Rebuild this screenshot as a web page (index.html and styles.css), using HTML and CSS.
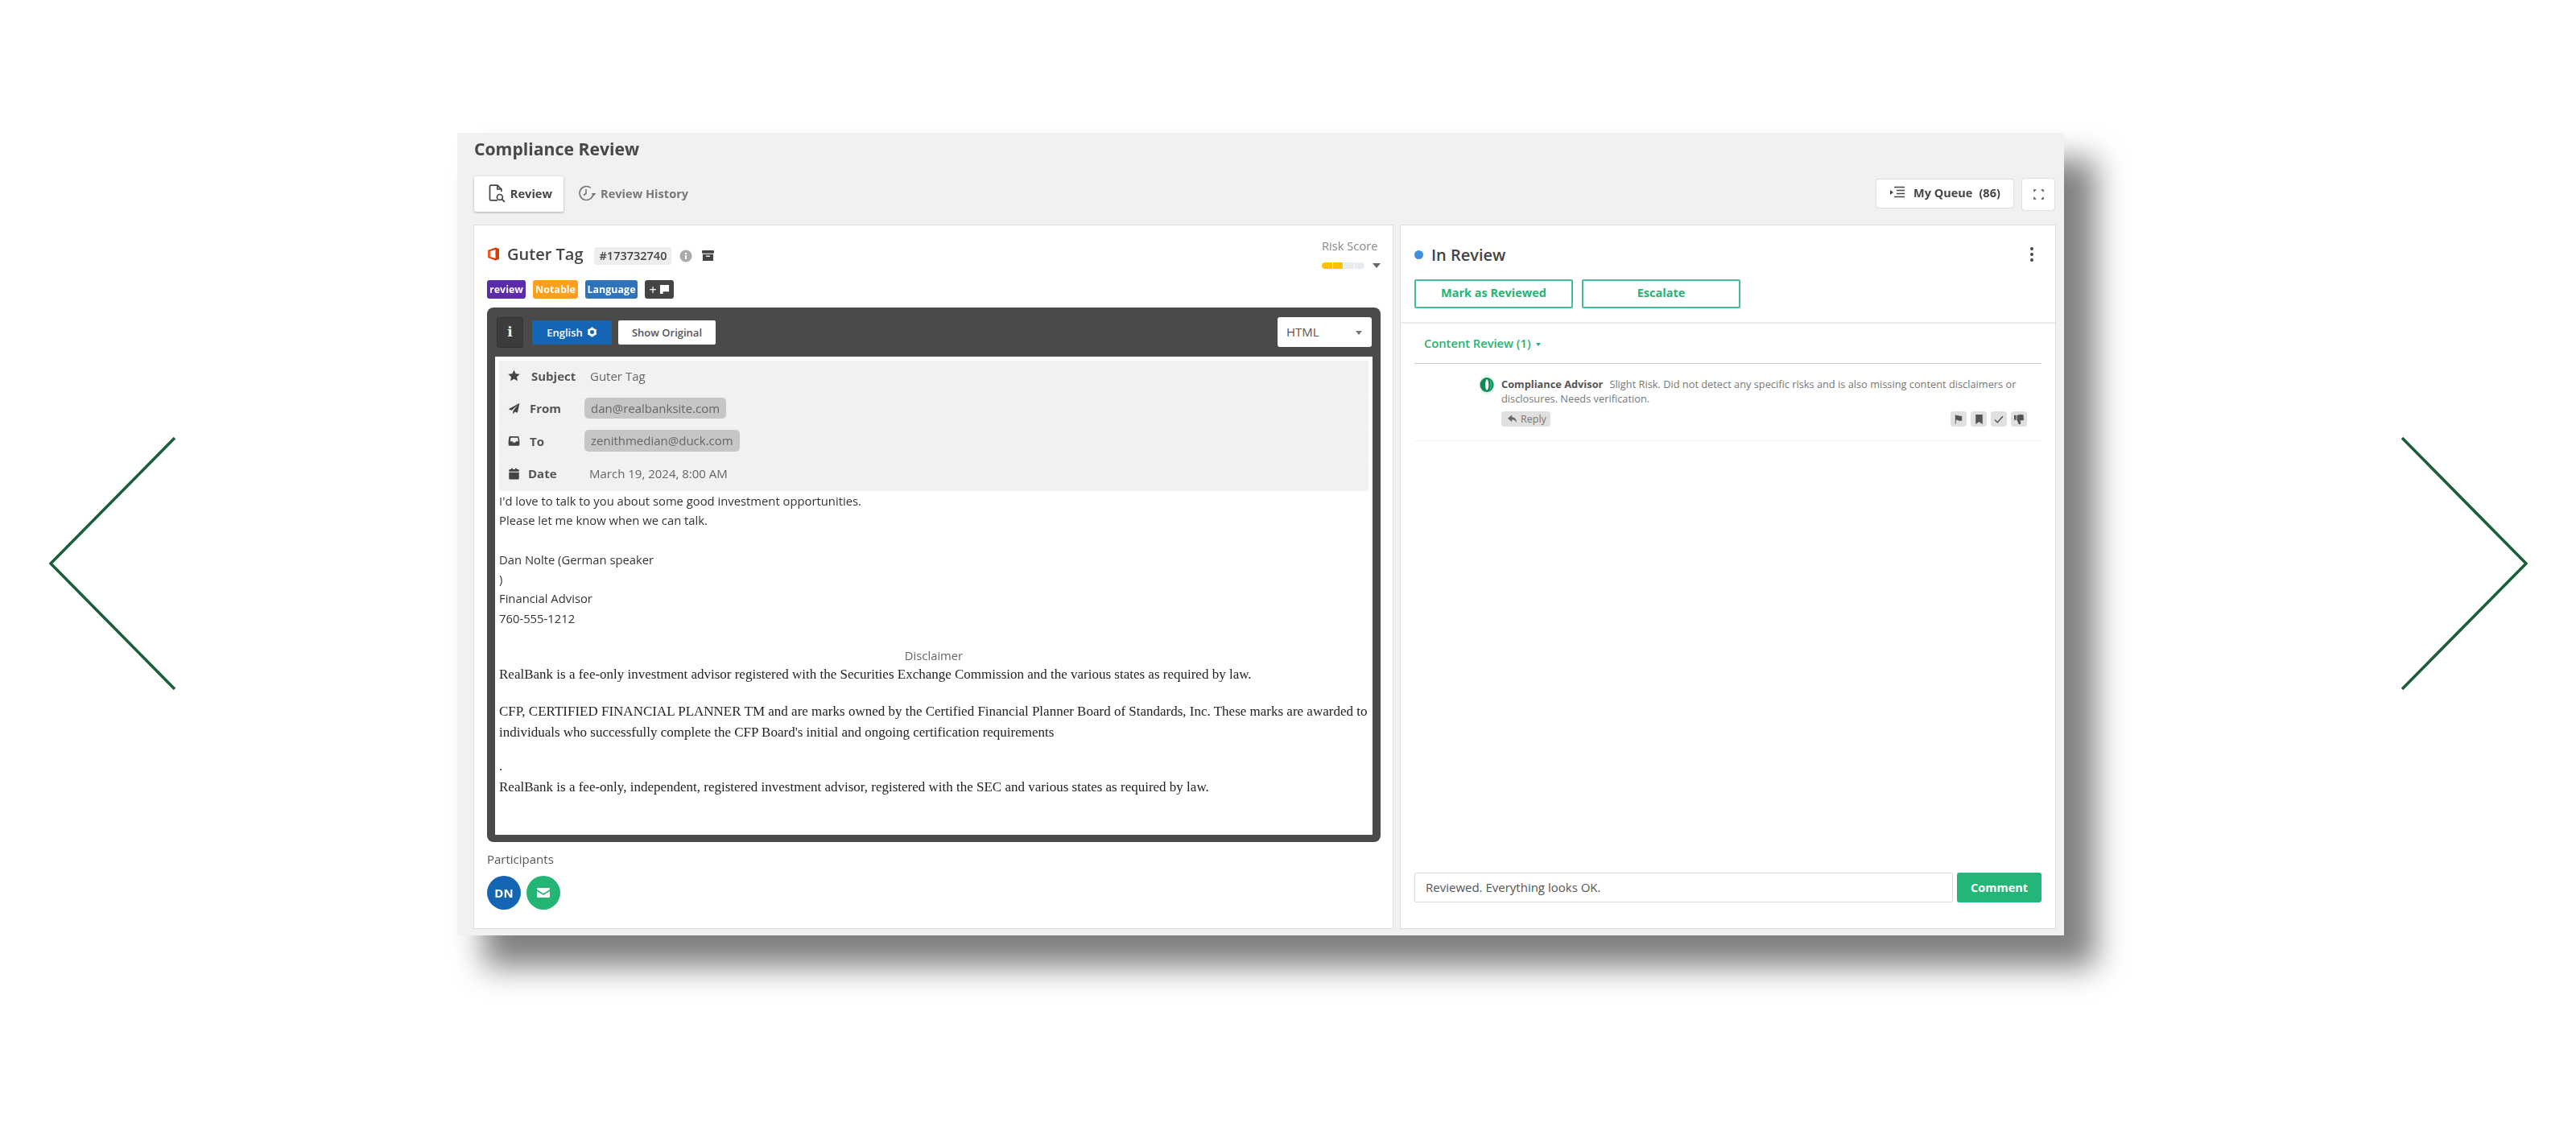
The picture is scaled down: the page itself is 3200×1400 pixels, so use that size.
FILE: index.html
```html
<!DOCTYPE html>
<html lang="en">
<head>
    <meta charset="UTF-8">
    <title>Compliance Review</title>
    <link rel="stylesheet" href="styles.css">
</head>
<body>
    <div class="stage">
        <svg class="chevron chevron-left" viewBox="0 0 160 320"><polyline points="156,4 2,160 156,316"/></svg>

        <div class="app">
            <h1 class="app-title">Compliance Review</h1>

            <div class="app-toolbar">
                <div class="tab tab-active">
                    <svg class="tab-icon" viewBox="0 0 24 24"><path d="M13 21H5a1.500 1.500 0 0 1-1.500-1.500v-16A1.500 1.500 0 0 1 5 2h8l5 5v3M13 2v5h5" fill="none" stroke="#444" stroke-width="1.700"/><circle cx="16" cy="17" r="3.500" fill="none" stroke="#444" stroke-width="1.700"/><path d="M18.500 19.500 22 23" stroke="#444" stroke-width="1.900"/></svg>
                    Review
                </div>
                <div class="tab">
                    <svg class="tab-icon" viewBox="0 0 24 24"><path d="M20 12a8.500 8.500 0 1 1-3-6.500" fill="none" stroke="#777" stroke-width="1.600"/><path d="M17.500 12h6l-3 3.500z" fill="#777"/><path d="M11 7v5.500l-3 2" fill="none" stroke="#777" stroke-width="1.600"/></svg>
                    Review History
                </div>
                <div class="toolbar-right">
                    <div class="queue-button">
                        <svg class="queue-icon" viewBox="0 0 20 16"><path d="M6 1.500h13M9 5.500h10M9 9.500h10M6 13.500h13" stroke="#444" stroke-width="1.500"/><path d="M1 5l4 3-4 3z" fill="#444"/></svg>
                        <span>My Queue</span><span class="queue-count">(86)</span>
                    </div>
                    <div class="expand-button">
                        <svg viewBox="0 0 14 14" width="13" height="13"><path d="M1 3.500V1h2.500M10.500 1H13v2.500M13 10.500V13h-2.500M3.500 13H1v-2.500" fill="none" stroke="#555" stroke-width="1.600"/></svg>
                    </div>
                </div>
            </div>

            <div class="panels">
                <div class="panel panel-left">
                    <div class="message-head">
                        <div class="message-title">
                            <svg class="office-logo" viewBox="0 0 16 18"><path d="M1 4.500 10.500 1 15 2.500v13L10.500 17 1 13.500z" fill="#d83b01"/><path d="M4 5.500 10.500 3.500v11L4 12.500z" fill="#fff"/><path d="M1 4.500 4 5.500v7l-3 1z" fill="#f25c29"/></svg>
                            <span class="subject-name">Guter Tag</span>
                            <span class="message-id">#173732740</span>
                            <svg class="info-icon" viewBox="0 0 16 16"><circle cx="8" cy="8" r="7.500" fill="#aaa"/><rect x="7" y="7" width="2" height="5" fill="#fff"/><rect x="7" y="4" width="2" height="2" fill="#fff"/></svg>
                            <svg class="archive-icon" viewBox="0 0 16 16"><rect x="0" y="1" width="16" height="4" rx="1" fill="#444"/><path d="M1 6h14v8a1 1 0 0 1-1 1H2a1 1 0 0 1-1-1z" fill="#444"/><rect x="5.500" y="8" width="5" height="1.500" fill="#fff"/></svg>
                        </div>
                        <div class="risk">
                            <div class="risk-label">Risk Score</div>
                            <div class="risk-row">
                                <span class="risk-seg on"></span><span class="risk-seg on"></span><span class="risk-seg"></span><span class="risk-seg"></span>
                                <span class="risk-caret"></span>
                            </div>
                        </div>
                    </div>

                    <div class="tags">
                        <span class="tag tag-review">review</span>
                        <span class="tag tag-notable">Notable</span>
                        <span class="tag tag-language">Language</span>
                        <span class="tag tag-add">+ <svg viewBox="0 0 14 14" width="13" height="13"><path d="M1 1h12v9H5v3H1z" fill="#fff"/></svg></span>
                    </div>

                    <div class="email-box">
                        <div class="email-toolbar">
                            <div class="info-button">i</div>
                            <div class="lang-button">English
                                <svg viewBox="0 0 14 14" width="13" height="13"><circle cx="7" cy="7" r="4.200" fill="none" stroke="#fff" stroke-width="3"/><path d="M7 .500v2.500M7 11v2.500M1.400 3.800l2.200 1.200M10.400 9l2.200 1.200M1.400 10.200 3.600 9M10.400 5l2.200-1.200" stroke="#fff" stroke-width="2.200"/></svg>
                            </div>
                            <div class="original-button">Show Original</div>
                            <div class="format-select">HTML<span class="select-caret"></span></div>
                        </div>

                        <div class="email-body">
                            <div class="meta">
                                <div class="meta-row">
                                    <svg class="meta-icon" viewBox="0 0 24 24"><polygon points="12,1 15.400,8.400 23.500,9.300 17.500,14.800 19.200,22.800 12,18.700 4.800,22.800 6.500,14.800 .500,9.300 8.600,8.400" fill="#444"/></svg>
                                    <span class="meta-label label-subject">Subject</span>
                                    <span class="meta-value value-subject">Guter Tag</span>
                                </div>
                                <div class="meta-row">
                                    <svg class="meta-icon" viewBox="0 0 24 24"><path d="M23 1 1 13l6.500 2.500L19 5 10 17v6l3.800-4.700 5.200 2.200z" fill="#444"/></svg>
                                    <span class="meta-label">From</span>
                                    <span class="address">dan@realbanksite.com</span>
                                </div>
                                <div class="meta-row">
                                    <svg class="meta-icon" viewBox="0 0 24 24"><path d="M5 3h14a3 3 0 0 1 3 2.500l1 8V19a3 3 0 0 1-3 3H4a3 3 0 0 1-3-3v-5.500l1-8A3 3 0 0 1 5 3zm.500 3-1 7h4.500l1.500 2.500h4L16 13h4.500l-1-7z" fill="#444" fill-rule="evenodd"/></svg>
                                    <span class="meta-label">To</span>
                                    <span class="address address-blur">zenithmedian@duck.com</span>
                                </div>
                                <div class="meta-row">
                                    <svg class="meta-icon" viewBox="0 0 24 24"><path d="M2 9h20v12a2 2 0 0 1-2 2H4a2 2 0 0 1-2-2zM4 3h2.500V1h3v2h5V1h3v2H20a2 2 0 0 1 2 2v2.500H2V5a2 2 0 0 1 2-2z" fill="#444"/></svg>
                                    <span class="meta-label label-date">Date</span>
                                    <span class="meta-value value-date">March 19, 2024, 8:00 AM</span>
                                </div>
                            </div>

                            <div class="email-text">
                                <div>I'd love to talk to you about some good investment opportunities.</div>
                                <div>Please let me know when we can talk.</div>
                                <div class="blank-line"></div>
                                <div>Dan Nolte (German speaker</div>
                                <div>)</div>
                                <div>Financial Advisor</div>
                                <div>760-555-1212</div>
                            </div>
                            <div class="disclaimer-title">Disclaimer</div>
                            <div class="disclaimer">
                                <p>RealBank is a fee-only investment advisor registered with the Securities Exchange Commission and the various states as required by law.</p>
                                <p>CFP, CERTIFIED FINANCIAL PLANNER TM and are marks owned by the Certified Financial Planner Board of Standards, Inc. These marks are awarded to individuals who successfully complete the CFP Board's initial and ongoing certification requirements</p>
                                <p class="dot-line">.<br>RealBank is a fee-only, independent, registered investment advisor, registered with the SEC and various states as required by law.</p>
                            </div>
                        </div>
                    </div>

                    <div class="participants-label">Participants</div>
                    <div class="participants">
                        <div class="avatar avatar-blue">DN</div>
                        <div class="avatar avatar-green">
                            <svg viewBox="0 0 16 12" width="16" height="12"><path d="M1 0h14a1 1 0 0 1 1 1v1L8 7 0 2V1a1 1 0 0 1 1-1zM0 4l8 5 8-5v7a1 1 0 0 1-1 1H1a1 1 0 0 1-1-1z" fill="#fff"/></svg>
                        </div>
                    </div>
                </div>

                <div class="panel panel-right">
                    <div class="review-head">
                        <div class="review-status">
                            <span class="status-dot"></span>
                            <span class="status-text">In Review</span>
                            <span class="kebab"><i></i><i></i><i></i></span>
                        </div>
                        <div class="review-actions">
                            <div class="outline-button">Mark as Reviewed</div>
                            <div class="outline-button">Escalate</div>
                        </div>
                    </div>

                    <div class="feed">
                        <div class="feed-title">Content Review (1) <span class="feed-caret"></span></div>
                        <div class="comment">
                            <svg class="advisor-icon" viewBox="0 0 20 24"><ellipse cx="10" cy="12" rx="10" ry="12" fill="#e4f6ee"/><ellipse cx="10" cy="12" rx="8.500" ry="9" fill="#0c8a56"/><path d="M10 5c3 1.500 3 12.500 0 14-2.500-1.500-2.500-12.500 0-14z" fill="#fff"/><path d="M13 4.500a8.500 9 0 0 1 0 15c1.500-4 1.500-11 0-15z" fill="#25b574"/></svg>
                            <div class="comment-main">
                                <div class="comment-text">
                                    <div class="comment-line"><b>Compliance Advisor</b><span>Slight Risk. Did not detect any specific risks and is also missing content disclaimers or</span></div>
                                    <div>disclosures. Needs verification.</div>
                                </div>
                                <div class="comment-actions">
                                    <div class="reply-chip">
                                        <svg viewBox="0 0 14 12" width="12" height="11"><path d="M6 0 0 5l6 5V7c3.500 0 5.500 1.500 7 4.500C13 7 10.500 3.500 6 3z" fill="#666"/></svg>
                                        Reply
                                    </div>
                                    <div class="icon-chips">
                                        <div class="icon-chip"><svg viewBox="0 0 12 14" width="10" height="12"><path d="M1 0h1v1h4l1 1h4v7H6L5 8H2v6H1z" fill="#555"/></svg></div>
                                        <div class="icon-chip"><svg viewBox="0 0 10 14" width="9" height="12"><path d="M0 0h10v14L5 10.500 0 14z" fill="#555"/></svg></div>
                                        <div class="icon-chip"><svg viewBox="0 0 14 12" width="12" height="10"><path d="M1 6.500 5 10.500 13 1.500" fill="none" stroke="#555" stroke-width="1.800"/></svg></div>
                                        <div class="icon-chip"><svg viewBox="0 0 14 14" width="12" height="12"><path d="M0 1h3v7H0zM4 1.500 7 0h5a1.500 1.500 0 0 1 1.500 1.500L14 7a1.500 1.500 0 0 1-1.500 1.500H9l.5 3.500a1.500 1.500 0 0 1-3 1L4 8z" fill="#555"/></svg></div>
                                    </div>
                                </div>
                            </div>
                        </div>
                    </div>

                    <div class="comment-form">
                        <div class="comment-input">Reviewed. Everything looks OK.</div>
                        <div class="comment-button">Comment</div>
                    </div>
                </div>
            </div>
        </div>

        <svg class="chevron chevron-right" viewBox="0 0 160 320"><polyline points="4,4 158,160 4,316"/></svg>
    </div>
</body>
</html>
```

FILE: styles.css
```css
* {
    box-sizing: border-box;
}

body {
    font-family: 'Open Sans', sans-serif;
    margin: 0;
    padding: 0;
    background-color: #fff;
    color: #444;
    overflow: hidden;
}

.stage {
    display: flex;
    align-items: flex-start;
    width: 3200px;
    height: 1400px;
}

.chevron {
    flex: none;
    width: 160px;
    height: 320px;
    margin-top: 540px;
}

.chevron polyline {
    fill: none;
    stroke: #1a5e3a;
    stroke-width: 3.6;
}

.chevron-left {
    margin-left: 61px;
}

.chevron-right {
    margin-left: 416px;
}

/* app window */
.app {
    flex: none;
    width: 1996px;
    height: 997px;
    margin-top: 165px;
    margin-left: 347px;
    padding: 5px 12px 0 21px;
    background-color: #f1f1f1;
    box-shadow: 36px 36px 36px 3px #808080;
    filter: blur(0.7px);
}

.app-title {
    margin: 0;
    font-size: 21.2px;
    line-height: 30px;
    font-weight: 700;
    color: #484848;
}

.app-toolbar {
    display: flex;
    align-items: center;
    height: 44px;
    margin-top: 19px;
}

.tab {
    display: flex;
    align-items: center;
    gap: 5px;
    height: 44px;
    padding: 0 14px 2px 16px;
    font-size: 14.6px;
    font-weight: 700;
    color: #777;
}

.tab-active {
    width: 111px;
    background-color: #fff;
    color: #444;
    border-radius: 2px;
    box-shadow: 0 1px 3px rgba(0, 0, 0, 0.3);
    margin-right: 1px;
}

.tab-icon {
    width: 24px;
    height: 24px;
}

.toolbar-right {
    display: flex;
    align-items: flex-start;
    gap: 11px;
    margin-left: auto;
}

.queue-button {
    display: flex;
    align-items: center;
    width: 170px;
    height: 35px;
    margin-top: 1px;
    padding: 0 0 2px 16px;
    background-color: #fff;
    border-radius: 3px;
    box-shadow: 0 0 2px rgba(0, 0, 0, 0.25);
    font-size: 14.5px;
    font-weight: 700;
}

.queue-icon {
    width: 20px;
    height: 16px;
    margin-right: 10px;
}

.queue-count {
    margin-left: 8px;
}

.expand-button {
    display: flex;
    align-items: center;
    justify-content: center;
    width: 40px;
    height: 39px;
    background-color: #fff;
    border-radius: 3px;
    box-shadow: 0 0 2px rgba(0, 0, 0, 0.25);
}

.panels {
    display: flex;
    gap: 8px;
    margin: 16px -3px 0 -1px;
}

.panel {
    flex: none;
    height: 875px;
    background-color: #fff;
    border: 1px solid #dedede;
}

/* left panel */
.panel-left {
    width: 1143px;
    padding: 16px 15px 0 16px;
}

.message-head {
    display: flex;
    justify-content: space-between;
    height: 38px;
}

.message-title {
    display: flex;
    align-items: center;
    height: 22px;
    margin-top: 8px;
}

.office-logo {
    width: 16px;
    height: 19px;
    margin-right: 9px;
}

.subject-name {
    font-size: 20px;
    font-weight: 600;
    margin-right: 14px;
}

.message-id {
    padding: 0 6px;
    height: 22px;
    margin-top: 5px;
    line-height: 22px;
    font-size: 14.5px;
    font-weight: 600;
    background-color: #eceef0;
    border-radius: 3px;
    margin-right: 10px;
}

.info-icon {
    width: 16px;
    height: 16px;
    margin-top: 5px;
    margin-right: 12px;
}

.archive-icon {
    width: 15px;
    height: 15px;
    margin-top: 5px;
}

.risk {
    width: 73px;
}

.risk-label {
    font-size: 14.7px;
    line-height: 18px;
    color: #888;
    white-space: nowrap;
}

.risk-row {
    display: flex;
    gap: 1px;
    align-items: center;
    margin-top: 12px;
}

.risk-seg {
    width: 13px;
    height: 8px;
    background-color: #e8ebee;
}

.risk-seg.on {
    background-color: #fcc200;
}

.risk-seg:first-child {
    border-radius: 4px 0 0 4px;
}

.risk-seg:nth-child(4) {
    border-radius: 0 4px 4px 0;
}

.risk-caret {
    width: 0;
    height: 0;
    margin-left: 9px;
    border-left: 5px solid transparent;
    border-right: 5px solid transparent;
    border-top: 6px solid #666;
}

.tags {
    display: flex;
    gap: 9px;
    margin-top: 14px;
}

.tag {
    display: flex;
    align-items: center;
    justify-content: center;
    height: 23px;
    border-radius: 3px;
    font-size: 12.5px;
    font-weight: 700;
    color: #fff;
}

.tag-review {
    width: 48px;
    background-color: #5b2bab;
}

.tag-notable {
    width: 56px;
    background-color: #ff9f1c;
}

.tag-language {
    width: 65px;
    background-color: #2f74b9;
}

.tag-add {
    gap: 3px;
    width: 36px;
    background-color: #444;
    font-size: 16px;
    font-weight: 400;
}

.email-box {
    width: 1110px;
    height: 664px;
    margin-top: 11px;
    background-color: #4a4a4a;
    border-radius: 8px;
}

.email-toolbar {
    display: flex;
    align-items: center;
    height: 61px;
    padding: 0 11px 0 12px;
}

.info-button {
    width: 33px;
    height: 38px;
    background-color: #3c3c3c;
    border: 1px solid #2e3338;
    border-radius: 3px;
    text-align: center;
    font-family: 'DejaVu Serif', serif;
    font-size: 17px;
    font-weight: 700;
    line-height: 35px;
    color: #eee;
    margin-right: 11px;
}

.lang-button {
    display: flex;
    align-items: center;
    justify-content: center;
    gap: 5px;
    width: 99px;
    height: 30px;
    background-color: #1565b5;
    border-radius: 2px;
    font-size: 13px;
    font-weight: 600;
    color: #fff;
    margin-right: 8px;
}

.original-button {
    width: 121px;
    height: 30px;
    background-color: #fff;
    border-radius: 2px;
    text-align: center;
    font-size: 13px;
    line-height: 30px;
    font-weight: 600;
    color: #555;
}

.format-select {
    position: relative;
    width: 117px;
    height: 37px;
    margin-left: auto;
    padding-left: 11px;
    background-color: #fff;
    border-radius: 3px;
    font-size: 15px;
    line-height: 37px;
    color: #555;
}

.select-caret {
    position: absolute;
    right: 12px;
    top: 17px;
    border-left: 4px solid transparent;
    border-right: 4px solid transparent;
    border-top: 5px solid #777;
}

.email-body {
    height: 594px;
    margin: 0 10px;
    padding: 5px 5px 0 5px;
    background-color: #fff;
}

.meta {
    background-color: #f1f1f1;
}

.meta-row {
    display: flex;
    align-items: center;
    height: 40.500px;
    padding: 0 0 2px 11px;
    border-bottom: 1px solid #f5f5f5;
    font-size: 15px;
}

.meta-icon {
    flex: none;
    width: 15px;
    height: 15px;
    margin-right: 12px;
}

.meta-label {
    width: 68px;
    font-weight: 700;
    color: #555;
}

.label-subject {
    margin-left: 2px;
    width: 67px;
}

.label-date {
    margin-left: -2px;
    width: 70px;
}

.meta-value {
    margin-left: 6px;
    color: #666;
}

.address {
    padding: 0 8px;
    height: 26px;
    line-height: 26px;
    background-color: #c6c6c6;
    border-radius: 5px;
    color: #666;
}

.address-blur {
    height: 27px;
    line-height: 27px;
    filter: blur(0.6px);
}

.email-text {
    font-size: 14.800px;
    line-height: 24.300px;
    color: #333;
}

.blank-line {
    height: 24.300px;
}

.disclaimer-title {
    margin-top: 23px;
    text-align: center;
    font-size: 14.800px;
    line-height: 22px;
    color: #666;
}

.disclaimer {
    font-family: 'Liberation Serif', serif;
    font-size: 17px;
    line-height: 26px;
    color: #222;
}

.disclaimer p {
    margin: 0 0 20px;
}

.disclaimer .dot-line {
    margin-top: -4px;
}

.participants-label {
    margin-top: 11px;
    font-size: 15px;
    line-height: 20px;
    color: #555;
}

.participants {
    display: flex;
    gap: 7px;
    margin-top: 11px;
}

.avatar {
    display: flex;
    align-items: center;
    justify-content: center;
    width: 42px;
    height: 42px;
    border-radius: 50%;
    font-size: 15px;
    font-weight: 700;
    color: #fff;
}

.avatar-blue {
    background-color: #1565b5;
}

.avatar-green {
    background-color: #22b573;
}

/* right panel */
.panel-right {
    display: flex;
    flex-direction: column;
    width: 815px;
}

.review-head {
    padding: 24px 17px 17px;
    border-bottom: 2px solid #eaeaea;
}

.review-status {
    display: flex;
    align-items: center;
    height: 24px;
}

.status-dot {
    width: 11px;
    height: 11px;
    background-color: #3d8fe0;
    border-radius: 50%;
    margin-right: 10px;
}

.status-text {
    font-size: 20px;
    font-weight: 600;
}

.kebab {
    display: flex;
    flex-direction: column;
    gap: 3px;
    margin-left: auto;
    margin-right: 10px;
}

.kebab i {
    display: block;
    width: 4px;
    height: 4px;
    border-radius: 50%;
    background-color: #444;
}

.review-actions {
    display: flex;
    gap: 11px;
    margin-top: 19px;
}

.outline-button {
    width: 197px;
    height: 36px;
    border: 2px solid #45bd90;
    border-radius: 2px;
    text-align: center;
    font-size: 14.500px;
    line-height: 30px;
    font-weight: 700;
    color: #22b573;
}

.feed {
    flex: 1;
    padding: 14px 17px 0;
}

.feed-title {
    height: 36px;
    padding-left: 12px;
    border-bottom: 1px solid #ccc;
    font-size: 14.700px;
    line-height: 20px;
    font-weight: 600;
    color: #22b573;
}

.feed-caret {
    display: inline-block;
    margin-left: 3px;
    vertical-align: middle;
    border-left: 3px solid transparent;
    border-right: 3px solid transparent;
    border-top: 4px solid #22b573;
}

.comment {
    display: flex;
    gap: 8px;
    padding: 16px 0 17px 80px;
    border-bottom: 1px solid #f3f3f3;
}

.advisor-icon {
    flex: none;
    width: 20px;
    height: 24px;
    margin-top: -2px;
}

.comment-main {
    flex: 1;
}

.comment-text {
    font-size: 12.800px;
    line-height: 18px;
    color: #777;
}

.comment-line {
    display: flex;
    gap: 8px;
    white-space: nowrap;
}

.comment-line b {
    color: #555;
}

.comment-actions {
    display: flex;
    justify-content: space-between;
    margin-top: 7px;
    padding-right: 18px;
}

.reply-chip {
    display: flex;
    align-items: center;
    gap: 4px;
    width: 61px;
    height: 19px;
    padding-left: 8px;
    background-color: #e0e0e0;
    border-radius: 4px;
    font-size: 12.500px;
    color: #777;
}

.icon-chips {
    display: flex;
    gap: 5px;
}

.icon-chip {
    display: flex;
    align-items: center;
    justify-content: center;
    width: 20px;
    height: 19px;
    background-color: #e0e0e0;
    border-radius: 4px;
}

.comment-form {
    display: flex;
    gap: 5px;
    padding: 0 17px 32px;
}

.comment-input {
    flex: 1;
    height: 37px;
    padding-left: 13px;
    border: 1px solid #dcdcdc;
    border-radius: 2px;
    font-size: 15px;
    line-height: 35px;
    color: #555;
}

.comment-button {
    width: 105px;
    height: 37px;
    background-color: #24b678;
    border-radius: 3px;
    text-align: center;
    font-size: 14.500px;
    line-height: 37px;
    font-weight: 700;
    color: #fff;
}
```
